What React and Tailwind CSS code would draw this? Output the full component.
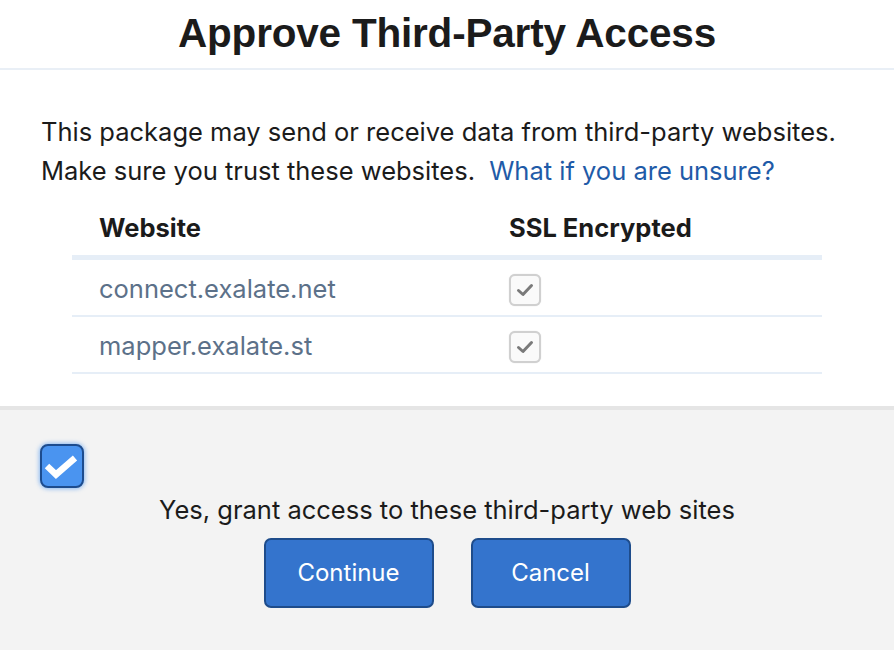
export default function App() {
  const sites = ["connect.exalate.net", "mapper.exalate.st"];
  const body = { fontFamily: "Inter, 'Noto Sans', sans-serif" };
  return (
    <div className="w-[894px] h-[650px] flex flex-col bg-white text-[#1b1b1b] overflow-hidden" style={body}>
      <div className="h-[70px] shrink-0 flex items-center justify-center border-b-2 border-[#e9eff6]">
        <h1 className="text-[40.5px] font-bold leading-none tracking-[-0.2px] -mt-[2px]" style={{ fontFamily: "'Liberation Sans', Arial, sans-serif" }}>
          Approve Third-Party Access
        </h1>
      </div>
      <div className="px-[41px] pt-[42px]">
        <p className="text-[25.5px] leading-[39px] whitespace-nowrap">
          This package may send or receive data from third-party websites.
          <br />
          Make sure you trust these websites.{" "}
          <a className="text-[#1f5ba8] ml-[7px]">What if you are unsure?</a>
        </p>
      </div>
      <div className="mx-[72px]">
        <div className="grid grid-cols-[437px_1fr] h-[70px] pt-[23px] items-start border-b-[5px] border-[#e6eef7] text-[25.5px] leading-[30px] font-bold">
          <div className="pl-[27px]">Website</div>
          <div>SSL Encrypted</div>
        </div>
        {sites.map((s) => (
          <div key={s} className="grid grid-cols-[437px_1fr] h-[57px] pt-[4px] items-center border-b-2 border-[#e6eef7] text-[25.5px] text-[#5c7189]">
            <div className="pl-[27px]">{s}</div>
            <div>
              <div className="w-[32px] h-[32px] rounded-[6px] border-2 border-[#d0d0d0] bg-[#fafafa] shadow-[0_0_1px_rgba(0,0,0,0.2)] flex items-center justify-center">
                <svg width="22" height="22" viewBox="0 0 22 22">
                  <path d="M4.5 11.5 L9 15.5 L17.5 6.5" fill="none" stroke="#7a7a7a" strokeWidth="3" strokeLinecap="round" strokeLinejoin="round" />
                </svg>
              </div>
            </div>
          </div>
        ))}
      </div>
      <div className="mt-[32px] flex-1 border-t-4 border-[#e5e5e5] bg-[#f3f3f3] flex flex-col">
        <div className="pl-[40px] pt-[34px]">
          <div className="w-[44px] h-[44px] rounded-[8px] border-2 border-[#1d4c8e] bg-[#4a94f0] shadow-[0_0_4px_1px_rgba(74,148,240,0.6)] flex items-center justify-center">
            <svg width="40" height="40" viewBox="0 0 40 40">
              <path d="M5 20 L14 28.5 L33 12" fill="none" stroke="#fff" strokeWidth="6.5" strokeLinejoin="miter" />
            </svg>
          </div>
        </div>
        <p className="text-center text-[25.5px] leading-[30px] mt-[7px]">Yes, grant access to these third-party web sites</p>
        <div className="flex justify-center gap-[37px] mt-[13px]">
          <button className="w-[170px] h-[70px] rounded-[7px] border-2 border-[#1e4c8b] bg-[#3474cd] text-white text-[24px]">Continue</button>
          <button className="w-[160px] h-[70px] rounded-[7px] border-2 border-[#1e4c8b] bg-[#3474cd] text-white text-[24px]">Cancel</button>
        </div>
      </div>
    </div>
  );
}
